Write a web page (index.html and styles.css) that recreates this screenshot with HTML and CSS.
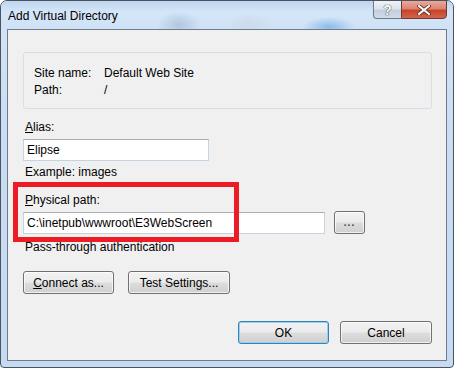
FILE: index.html
```html
<!DOCTYPE html>
<html lang="en">
<head>
    <meta charset="UTF-8">
    <title>Add Virtual Directory</title>
    <link rel="stylesheet" href="styles.css">
</head>
<body>
    <div class="window">
        <div class="titlebar">
            <span class="title">Add Virtual Directory</span>
            <div class="caption-buttons">
                <div class="cap-btn help">?</div>
                <div class="cap-btn close">
                    <svg width="14" height="10" viewBox="0 0 14 10">
                        <path d="M2 1 L12 9 M12 1 L2 9" stroke="#5a2a22" stroke-width="3.6" stroke-linecap="square"/>
                        <path d="M2 1 L12 9 M12 1 L2 9" stroke="#ffffff" stroke-width="2" stroke-linecap="square"/>
                    </svg>
                </div>
            </div>
        </div>

        <div class="client">
            <div class="info-box">
                <div class="info-row"><span class="info-label">Site name:</span><span>Default Web Site</span></div>
                <div class="info-row"><span class="info-label">Path:</span><span>/</span></div>
            </div>

            <div class="label alias-label"><u>A</u>lias:</div>
            <div class="textbox alias-box">Elipse</div>
            <div class="label hint">Example: images</div>

            <div class="label path-label"><u>P</u>hysical path:</div>
            <div class="path-row">
                <div class="textbox path-box">C:\inetpub\wwwroot\E3WebScreen</div>
                <button class="btn browse">...</button>
            </div>
            <div class="label auth">Pass-through authentication</div>

            <div class="button-row">
                <button class="btn connect"><u>C</u>onnect as...</button>
                <button class="btn test">Test Settings...</button>
            </div>

            <div class="dialog-buttons">
                <button class="btn ok">OK</button>
                <button class="btn cancel">Cancel</button>
            </div>

            <div class="highlight"></div>
        </div>
    </div>
</body>
</html>
```

FILE: styles.css
```css
body {
    margin: 0;
    font-family: "Liberation Sans", Arial, sans-serif;
    font-size: 12px;
    color: #000;
    background-color: #fff;
}

.window {
    width: 454px;
    height: 368px;
    box-sizing: border-box;
    border: 1px solid #4a5360;
    border-radius: 7px 7px 4px 4px;
    background: linear-gradient(180deg, #c3d8f0 0%, #d2e3f6 8%, #c9dcf2 40%, #c6daf1 100%);
    display: flex;
    flex-direction: column;
    overflow: hidden;
}

.titlebar {
    height: 28px;
    display: flex;
    justify-content: space-between;
    align-items: flex-start;
    background:
        radial-gradient(ellipse 22px 14px at 178px 24px, rgba(120, 150, 180, 0.35), transparent),
        radial-gradient(ellipse 22px 14px at 248px 24px, rgba(200, 215, 230, 0.6), transparent),
        radial-gradient(ellipse 26px 10px at 328px 26px, rgba(60, 140, 220, 0.45), transparent),
        linear-gradient(180deg, #bfd5ee 0%, #d5e6f8 40%, #cfe1f5 100%);
}

.title {
    margin: 8px 0 0 7px;
    font-size: 12px;
    color: #000;
}

.caption-buttons {
    display: flex;
    margin-right: 6px;
    margin-top: -1px;
}

.cap-btn {
    height: 19px;
    box-sizing: border-box;
    border: 1px solid #6d7a8a;
    display: flex;
    align-items: center;
    justify-content: center;
}

.help {
    width: 28px;
    border-right: none;
    border-radius: 0 0 0 4px;
    background: linear-gradient(180deg, #eef3f9 0%, #dbe4ee 48%, #c3cfdc 52%, #cfdbe8 100%);
    font-size: 14px;
    font-weight: bold;
    color: #fff;
    text-shadow: 0 0 1px #333, 0 0 1px #333;
}

.close {
    width: 46px;
    border-color: #6a3b35;
    border-radius: 0 0 4px 0;
    background: linear-gradient(180deg, #e9a99c 0%, #dd8573 45%, #c7432c 55%, #d5644a 100%);
}

.client {
    position: relative;
    margin: 0 6px 6px 6px;
    flex: 1;
    border: 1px solid #6f7c8c;
    background-color: #f0f0f0;
    padding: 22px 14px 0 15px;
    display: flex;
    flex-direction: column;
    align-items: flex-start;
}

.info-box {
    align-self: stretch;
    height: 57px;
    box-sizing: border-box;
    border: 1px solid #d5dfe5;
    border-radius: 3px;
    padding: 12px 10px 0 10px;
}

.info-row {
    display: flex;
    height: 17px;
    line-height: 17px;
}

.info-label {
    width: 70px;
}

.label {
    line-height: 15px;
    height: 15px;
    margin-left: 2px;
}

.alias-label {
    margin-top: 11px;
}

.textbox {
    height: 22px;
    box-sizing: border-box;
    border: 1px solid #c5d2e0;
    border-top-color: #abadb3;
    background-color: #fff;
    padding: 0 3px;
    line-height: 20px;
}

.alias-box {
    width: 186px;
    margin-top: 4px;
}

.hint {
    margin-top: 4px;
}

.path-label {
    margin-top: 13px;
}

.path-row {
    margin-top: 4px;
    display: flex;
    gap: 9px;
    align-items: flex-start;
}

.path-box {
    width: 302px;
}

.auth {
    margin-top: 6px;
}

.btn {
    height: 23px;
    box-sizing: border-box;
    border: 1px solid #707070;
    border-radius: 3px;
    background: linear-gradient(180deg, #f2f2f2 0%, #ebebeb 48%, #dddddd 52%, #cfcfcf 100%);
    box-shadow: inset 0 0 0 1px rgba(255, 255, 255, 0.7);
    font-family: "Liberation Sans", Arial, sans-serif;
    font-size: 12px;
    color: #000;
    padding: 0;
}

.browse {
    width: 31px;
    margin-top: -1px;
    font-size: 10px;
    font-weight: bold;
    color: #444;
    letter-spacing: 1px;
}

.button-row {
    margin-top: 16px;
    display: flex;
    gap: 14px;
}

.connect {
    width: 91px;
}

.test {
    width: 102px;
}

.dialog-buttons {
    align-self: flex-end;
    margin-top: 27px;
    display: flex;
    gap: 11px;
}

.ok {
    width: 91px;
    border-color: #3c7fb1;
    box-shadow: inset 0 0 0 1px #8fd3f5;
}

.cancel {
    width: 92px;
}

/* red annotation drawn over the dialog */
.highlight {
    position: absolute;
    left: 5px;
    top: 152px;
    width: 216px;
    height: 50px;
    border: 5px solid #ed1c24;
}
```
